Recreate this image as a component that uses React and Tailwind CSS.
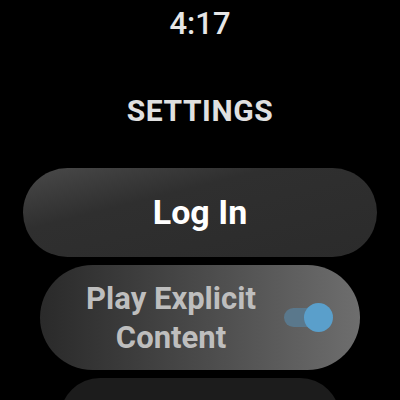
import React from 'react';

function Toggle() {
    return (
        <div className="relative w-[49px] h-[29px] shrink-0">
            <div className="absolute left-0 top-[5px] w-[38px] h-[19px] rounded-full bg-[#5a788c]" />
            <div className="absolute right-0 top-0 w-[29px] h-[29px] rounded-full bg-[#5a9fcb]" />
        </div>
    );
}

export default function App() {
    return (
        <div
            className="w-[400px] h-[400px] bg-black overflow-hidden flex flex-col items-center"
            style={{ fontFamily: 'Roboto, "Liberation Sans", sans-serif' }}
        >
            <div className="mt-[8px] text-[31px] leading-none font-medium text-[#e6e6e6]">4:17</div>
            <div className="mt-[57px] text-[30px] leading-none font-bold tracking-[0.6px] text-[#e0e0e0]">SETTINGS</div>

            <button className="mt-[42px] w-[354px] h-[89px] shrink-0 rounded-full bg-linear-to-br from-[#4a4a4a] via-[#2f2f2f] via-35% to-[#2b2b2b] flex items-center justify-center">
                <span className="text-[34px] font-bold text-white">Log In</span>
            </button>

            <div className="mt-[8px] w-[320px] h-[105px] shrink-0 rounded-full bg-linear-to-r from-[#2a2a2a] via-[#4a4a4a] to-[#6e6e6e] flex items-center pl-[36px] pr-[27px] gap-[18px]">
                <div className="flex-1 text-center text-[31px] leading-[39px] font-bold text-[#bebebe]">
                    Play Explicit Content
                </div>
                <Toggle />
            </div>

            <div className="mt-[8px] w-[280px] h-[80px] shrink-0 rounded-full bg-[#1c1c1c]" />
        </div>
    );
}
